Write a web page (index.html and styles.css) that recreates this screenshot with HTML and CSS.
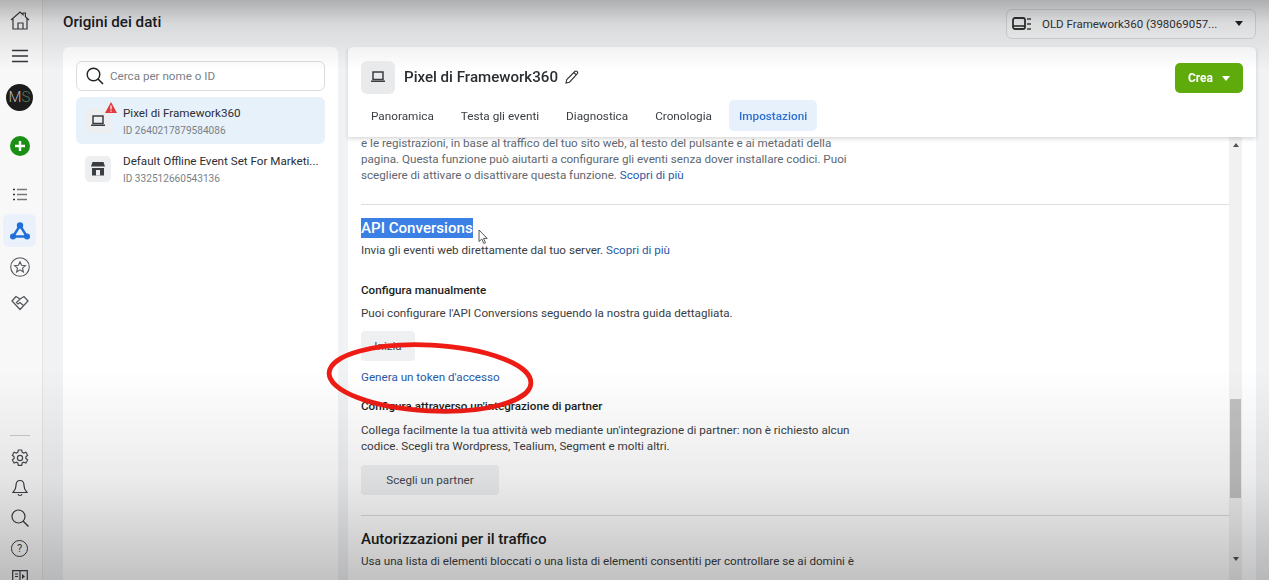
FILE: index.html
```html
<!DOCTYPE html>
<html lang="it">
<head>
    <meta charset="UTF-8">
    <meta name="viewport" content="width=device-width, initial-scale=1.0">
    <title>Origini dei dati</title>
    <link rel="stylesheet" href="styles.css">
</head>
<body>
    <div class="page">
        <!-- Barra laterale -->
        <nav class="sidebar">
            <svg class="nav-icon home" viewBox="0 0 20 20" width="20" height="20"><path d="M1 10 10 2l3 2.600V3h2.400v3.800L19 10M3 8.500V19h14V8.500M8 19v-6h5v6" fill="none" stroke="#3a3d42" stroke-width="1.200"/></svg>
            <svg class="nav-icon menu" viewBox="0 0 16 14" width="16" height="14"><path d="M0 1.500h16M0 7h16M0 12.500h16" stroke="#33363b" stroke-width="1.500"/></svg>
            <div class="avatar">M<span>S</span></div>
            <div class="add"><svg viewBox="0 0 20 20" width="20" height="20"><circle cx="10" cy="10" r="10" fill="#1a8f14"/><path d="M10 5v10M5 10h10" stroke="#fff" stroke-width="2.400"/></svg></div>
            <svg class="nav-icon list" viewBox="0 0 14 13" width="14" height="13"><path d="M4 1.500h10M4 6.500h10M4 11.500h10" stroke="#777" stroke-width="1.300"/><path d="M0 1.500h2M0 6.500h2M0 11.500h2" stroke="#333" stroke-width="1.600"/></svg>
            <div class="nav-active"><svg viewBox="0 0 20 18" width="20" height="18"><path d="M10 3.500 3 14.500h14z" fill="none" stroke="#1f6fdc" stroke-width="2.400"/><circle cx="10" cy="3.500" r="3.200" fill="#1f6fdc"/><circle cx="3" cy="14.500" r="3" fill="#1f6fdc"/><circle cx="17" cy="14.500" r="3" fill="#1f6fdc"/></svg></div>
            <svg class="nav-icon star" viewBox="0 0 20 20" width="20" height="20"><circle cx="10" cy="10" r="9.300" fill="none" stroke="#55585c" stroke-width="1.100"/><path d="m10 4.800 1.600 3.500 3.800.4-2.900 2.500.9 3.800L10 12.900l-3.400 2.100.9-3.800-2.900-2.500 3.800-.4z" fill="none" stroke="#55585c" stroke-width="1.100"/></svg>
            <svg class="nav-icon shake" viewBox="0 0 18 16" width="18" height="16"><path d="M5 1.500 1 6l8 8.500L17 6l-4-4.500-4 2.500zM9 4 5.500 7.500 7 9l2-1.500 4 3.500" fill="none" stroke="#55585c" stroke-width="1.300"/></svg>
            <div class="spacer"></div>
            <div class="nav-line"></div>
            <svg class="nav-icon gear" viewBox="0 0 18 18" width="18" height="18"><path d="m7.300 1h3.400l.5 2.300 1.500.8 2.200-.8 1.700 3-1.700 1.500v1.700l1.700 1.500-1.700 3-2.200-.8-1.500.8-.5 2.300H7.300l-.5-2.300-1.500-.8-2.200.8-1.700-3 1.700-1.500V7.800L1.400 6.300l1.700-3 2.200.8 1.500-.8z" fill="none" stroke="#45484c" stroke-width="1.200"/><circle cx="9" cy="9" r="2.600" fill="none" stroke="#45484c" stroke-width="1.200"/></svg>
            <svg class="nav-icon bell" viewBox="0 0 16 18" width="16" height="18"><path d="M8 1.500c-3 0-4 2.300-4 5 0 3.500-1 5-3 7h14c-2-2-3-3.500-3-7 0-2.700-1-5-4-5zM6 15c.3 2 3.700 2 4 0" fill="none" stroke="#3a3d42" stroke-width="1.200"/></svg>
            <svg class="nav-icon search" viewBox="0 0 18 18" width="18" height="18"><circle cx="7.500" cy="7.500" r="6.500" fill="none" stroke="#3a3d42" stroke-width="1.200"/><path d="m12 12 5.500 5.500" stroke="#3a3d42" stroke-width="1.400"/></svg>
            <div class="help">?</div>
            <svg class="nav-icon book" viewBox="0 0 16 14" width="16" height="14"><path d="M.7.700h14.600V14H.7zM8 .7V14M3 4h3M3 6.500h3" fill="none" stroke="#3a3d42" stroke-width="1.200"/><path d="m10 4 3 2.500L10 9z" fill="#3a3d42"/></svg>
        </nav>

        <div class="main">
            <header class="topbar">
                <h1>Origini dei dati</h1>
                <div class="account">
                    <svg viewBox="0 0 20 14" width="20" height="14"><rect x="1" y="1" width="12" height="11" rx="2" fill="none" stroke="#333" stroke-width="1.800"/><path d="M1 9h12" stroke="#333" stroke-width="1.600"/><path d="M15 2h4M15 7h4M15 12h4" stroke="#444" stroke-width="1.400"/></svg>
                    <span class="account-name">OLD Framework360 (398069057...</span>
                    <span class="caret"></span>
                </div>
            </header>

            <div class="columns">
                <!-- Lista delle origini -->
                <aside class="sources">
                    <div class="searchbox">
                        <svg viewBox="0 0 18 18" width="18" height="18"><circle cx="7.500" cy="7.500" r="6.300" fill="none" stroke="#222" stroke-width="1.400"/><path d="m12 12 5 5" stroke="#222" stroke-width="1.600"/></svg>
                        <span>Cerca per nome o ID</span>
                    </div>
                    <div class="source selected">
                        <div class="source-icon">
                            <svg viewBox="0 0 14 12" width="14" height="12"><path d="M2 1h10v7.500H2z" fill="none" stroke="#3a3d42" stroke-width="1.500"/><path d="M0 9.500h14V11H0z" fill="#3a3d42"/></svg>
                            <svg class="warn" viewBox="0 0 12 11" width="12" height="11"><path d="M6 0 12 11H0z" fill="#e0393e"/><path d="M6 3.500v4M6 8.500v1.200" stroke="#fff" stroke-width="1.200"/></svg>
                        </div>
                        <div>
                            <div class="source-name">Pixel di Framework360</div>
                            <div class="source-id">ID 2640217879584086</div>
                        </div>
                    </div>
                    <div class="source">
                        <div class="source-icon">
                            <svg viewBox="0 0 14 14" width="14" height="14"><path d="M1.500 0h11L14 4.500H0z" fill="#3a3d42"/><path d="M1 6h12v7.500H1z" fill="#3a3d42"/><path d="M5 8h4v5.500H5z" fill="#eceef0"/></svg>
                        </div>
                        <div class="source-text">
                            <div class="source-name">Default Offline Event Set For Marketi...</div>
                            <div class="source-id">ID 332512660543136</div>
                        </div>
                    </div>
                </aside>

                <!-- Dettaglio del pixel -->
                <section class="detail">
                    <div class="detail-head">
                        <div class="head-row">
                            <div class="head-icon"><svg viewBox="0 0 14 12" width="14" height="12"><path d="M2 1h10v7.500H2z" fill="none" stroke="#3a3d42" stroke-width="1.500"/><path d="M0 9.500h14V11H0z" fill="#3a3d42"/></svg></div>
                            <h2>Pixel di Framework360</h2>
                            <svg class="pencil" viewBox="0 0 14 14" width="14" height="14"><path d="M1 13l.8-3.500L9.800 1.500c.7-.7 1.700-.7 2.300 0 .7.700.7 1.600 0 2.300L4.500 12.200zM8.800 2.500l2.700 2.700" fill="none" stroke="#333" stroke-width="1.100"/></svg>
                            <div class="create">Crea<span class="caret white"></span></div>
                        </div>
                        <div class="tabs">
                            <a class="tab">Panoramica</a>
                            <a class="tab">Testa gli eventi</a>
                            <a class="tab">Diagnostica</a>
                            <a class="tab">Cronologia</a>
                            <a class="tab active">Impostazioni</a>
                        </div>
                    </div>

                    <div class="detail-body">
                        <div class="scroll">
                            <p class="intro">e le registrazioni, in base al traffico del tuo sito web, al testo del pulsante e ai metadati della pagina. Questa funzione può aiutarti a configurare gli eventi senza dover installare codici. Puoi scegliere di attivare o disattivare questa funzione. <a>Scopri di più</a></p>
                            <hr class="first-rule">
                            <h3 class="api-title"><span>API Conversions</span></h3>
                            <p class="api-text">Invia gli eventi web direttamente dal tuo server. <a>Scopri di più</a></p>
                            <h4 class="manual-title">Configura manualmente</h4>
                            <p class="manual-text">Puoi configurare l'API Conversions seguendo la nostra guida dettagliata.</p>
                            <div class="btn start">Inizia</div>
                            <a class="token">Genera un token d'accesso</a>
                            <h4 class="partner-title">Configura attraverso un'integrazione di partner</h4>
                            <p class="partner-text">Collega facilmente la tua attività web mediante un'integrazione di partner: non è richiesto alcun codice. Scegli tra Wordpress, Tealium, Segment e molti altri.</p>
                            <div class="btn partner">Scegli un partner</div>
                            <hr class="second-rule">
                            <h3 class="traffic-title">Autorizzazioni per il traffico</h3>
                            <p class="traffic-text">Usa una lista di elementi bloccati o una lista di elementi consentiti per controllare se ai domini è</p>
                        </div>
                        <div class="scrollbar">
                            <span class="arrow up"></span>
                            <div class="thumb"></div>
                            <span class="arrow down"></span>
                        </div>
                    </div>
                </section>
            </div>
        </div>
    </div>

    <!-- Annotazione del video, cursore e sfumature sopra la pagina -->
    <svg class="mark" viewBox="0 0 1269 580" width="1269" height="580">
        <ellipse cx="430" cy="378" rx="101" ry="33" transform="rotate(3 430 378)" fill="none" stroke="#ee1c14" stroke-width="4.800"/>
        <path d="M479 230v11.500l2.800-2.500 2 4.500 1.700-.8-2-4.300h3.700z" fill="#fff" stroke="#444" stroke-width=".9"/>
    </svg>
    <div class="shade"></div>
</body>
</html>
```

FILE: styles.css
```css
* {
    box-sizing: border-box;
}

body {
    margin: 0;
    font-family: Roboto, "Liberation Sans", sans-serif;
    color: #1c1e21;
    background-color: #f1f2f4;
    overflow: hidden;
}

.page {
    display: flex;
    width: 1269px;
    height: 580px;
    overflow: hidden;
}

/* Barra laterale */
.sidebar {
    display: flex;
    flex-direction: column;
    align-items: center;
    flex: 0 0 43px;
    height: 580px;
    padding: 10px 3px 0 0;
    background-color: #f8f8f9;
    border-right: 1px solid #e3e4e6;
}

.nav-icon {
    display: block;
    flex-shrink: 0;
}

.menu {
    margin-top: 19px;
}

.avatar {
    width: 27px;
    height: 27px;
    margin-top: 21px;
    flex-shrink: 0;
    border-radius: 50%;
    background-color: #1c1c1c;
    color: #b9b9b9;
    font-size: 15px;
    line-height: 27px;
    text-align: center;
    font-weight: 300;
}

.avatar span {
    color: #4f7f5f;
}

.add {
    height: 20px;
    margin-top: 25px;
    flex-shrink: 0;
}

.list {
    margin-top: 32px;
}

.nav-active {
    display: flex;
    align-items: center;
    justify-content: center;
    width: 33px;
    height: 33px;
    margin-top: 13px;
    flex-shrink: 0;
    border-radius: 6px;
    background-color: #eaf1fb;
}

.star {
    margin-top: 10px;
}

.shake {
    margin-top: 18px;
}

.spacer {
    flex: 1;
}

.nav-line {
    width: 20px;
    height: 1px;
    flex-shrink: 0;
    background-color: #c9cacb;
}

.gear {
    margin-top: 13px;
}

.bell {
    margin-top: 12px;
}

.search {
    margin-top: 12px;
}

.help {
    width: 17px;
    height: 17px;
    margin-top: 13px;
    flex-shrink: 0;
    border: 1px solid #3a3d42;
    border-radius: 50%;
    font-size: 11px;
    line-height: 15px;
    text-align: center;
    color: #3a3d42;
}

.book {
    margin-top: 13px;
    margin-bottom: -4px;
}

/* Contenuto */
.main {
    flex: 1;
    min-width: 0;
    padding: 0 13px 0 20px;
}

.topbar {
    display: flex;
    align-items: center;
    justify-content: space-between;
    height: 47px;
    padding-bottom: 3px;
}

h1 {
    margin: 0;
    font-size: 15.200px;
    font-weight: 500;
    color: #1c2025;
}

.account {
    display: flex;
    align-items: center;
    width: 250px;
    height: 30px;
    margin-top: 3px;
    padding: 0 12px 0 5px;
    border: 1px solid #d6d8da;
    border-radius: 6px;
    background-color: #f5f6f7;
    font-size: 11.500px;
    color: #333;
}

.account-name {
    flex: 1;
    margin-left: 10px;
    white-space: nowrap;
}

.caret {
    width: 0;
    height: 0;
    border-left: 4.500px solid transparent;
    border-right: 4.500px solid transparent;
    border-top: 5px solid #222;
}

.caret.white {
    margin-left: 9px;
    border-top-color: #fff;
}

.columns {
    display: flex;
    gap: 10px;
    height: 533px;
}

.sources {
    flex: 0 0 275px;
    min-width: 0;
    padding: 14px 13px;
    background-color: #fff;
    border-radius: 6px 6px 0 0;
}

.searchbox {
    display: flex;
    align-items: center;
    gap: 6px;
    height: 30px;
    padding-left: 9px;
    border: 1px solid #dadde1;
    border-radius: 6px;
    font-size: 11.650px;
    color: #7a7f86;
}

.source {
    display: flex;
    align-items: center;
    gap: 12px;
    height: 47px;
    margin-top: 7px;
    padding: 0 9px;
    border-radius: 6px;
}

.source.selected {
    margin-top: 6px;
    background-color: #e7f1fa;
}

.source + .source {
    margin-top: 1px;
}

.source-icon {
    position: relative;
    display: flex;
    align-items: center;
    justify-content: center;
    flex: 0 0 26px;
    height: 26px;
    border-radius: 5px;
    background-color: #eceef0;
}

.warn {
    position: absolute;
    top: -6px;
    right: -6px;
}

.source-name {
    font-size: 11.650px;
    line-height: 16px;
    white-space: nowrap;
    color: #2b2e33;
}

.source-id {
    margin-top: 3px;
    font-size: 10.100px;
    line-height: 13px;
    color: #7a7f86;
}

.detail {
    display: flex;
    flex-direction: column;
    flex: 1;
    min-width: 0;
    background-color: #fff;
    border-radius: 6px 6px 0 0;
}

.detail-head {
    position: relative;
    z-index: 1;
    flex: 0 0 90px;
    padding: 13px 13px 0 13px;
    box-shadow: 0 2px 4px rgba(0, 0, 0, 0.15);
}

.head-row {
    display: flex;
    align-items: center;
    height: 34px;
}

.head-icon {
    display: flex;
    align-items: center;
    justify-content: center;
    width: 34px;
    height: 33px;
    border-radius: 6px;
    background-color: #e9eaec;
}

h2 {
    margin: 0 0 0 9px;
    font-size: 15.100px;
    font-weight: 500;
    color: #2a2d31;
}

.pencil {
    margin-left: 7px;
}

.create {
    display: flex;
    align-items: center;
    justify-content: center;
    width: 68px;
    height: 30px;
    margin-left: auto;
    margin-top: 2px;
    border-radius: 5px;
    background-color: #5fab0b;
    color: #fff;
    font-size: 12px;
    font-weight: 700;
}

.tabs {
    display: flex;
    gap: 7px;
    margin-top: 6px;
}

.tab {
    height: 31px;
    padding: 0 10px;
    border-radius: 5px;
    font-size: 11.750px;
    line-height: 32px;
    color: #3a3d42;
}

.tab.active {
    background-color: #e7f1fc;
    color: #2f6fd0;
    font-weight: 500;
}

.detail-body {
    display: flex;
    flex: 1;
    min-height: 0;
    padding-right: 14px;
}

.scroll {
    flex: 1;
    min-width: 0;
    padding-left: 13px;
    overflow: hidden;
    font-size: 11.650px;
    line-height: 16px;
    color: #3a3d42;
}

.scroll a,
.token {
    color: #2a5aa8;
}

p {
    margin: 0;
    max-width: 490px;
}

hr {
    height: 1px;
    margin: 0;
    border: 0;
    background-color: #dadde1;
}

.intro {
    margin-top: -2px;
    color: #606770;
}

.first-rule {
    margin-top: 21px;
}

h3 {
    margin: 0;
    font-size: 15.100px;
    font-weight: 500;
    line-height: 20px;
    color: #1c1e21;
}

.api-title {
    margin-top: 13px;
}

.api-title span {
    display: inline-block;
    background-color: #3b80e4;
    color: #fff;
}

.api-text {
    margin-top: 4px;
}

h4 {
    margin: 0;
    font-size: 11.650px;
    font-weight: 500;
    line-height: 16px;
    color: #1c1e21;
}

.manual-title {
    margin-top: 24px;
}

.manual-text {
    margin-top: 7px;
    max-width: none;
}

.btn {
    display: flex;
    align-items: center;
    justify-content: center;
    height: 30px;
    border-radius: 4px;
    background-color: #eff0f2;
    color: #444950;
    font-size: 11.650px;
}

.start {
    width: 54px;
    margin-top: 10px;
}

.token {
    display: block;
    margin-top: 8px;
}

.partner-title {
    margin-top: 13px;
}

.partner-text {
    margin-top: 8px;
}

.partner {
    width: 138px;
    margin-top: 11px;
}

.second-rule {
    margin-top: 20px;
}

.traffic-title {
    margin-top: 13px;
}

.traffic-text {
    margin-top: 4px;
    max-width: none;
}

.scrollbar {
    display: flex;
    flex-direction: column;
    align-items: center;
    flex: 0 0 13px;
    background-color: #f1f1f1;
}

.thumb {
    flex: 0 0 99px;
    width: 11px;
    margin-top: 252px;
    background-color: #c1c1c1;
}

.arrow {
    width: 0;
    height: 0;
    border-left: 3.500px solid transparent;
    border-right: 3.500px solid transparent;
}

.arrow.up {
    margin-top: 6px;
    border-bottom: 4px solid #505050;
}

.arrow.down {
    margin-top: 59px;
    border-top: 4px solid #505050;
}

/* Sopra la pagina */
.mark {
    position: fixed;
    top: 0;
    left: 0;
    pointer-events: none;
}

.shade {
    position: fixed;
    top: 0;
    left: 0;
    width: 1269px;
    height: 580px;
    pointer-events: none;
    background: linear-gradient(to bottom, rgba(0, 0, 0, 0.28) 0, rgba(0, 0, 0, 0.1) 24px, rgba(0, 0, 0, 0) 70px, rgba(0, 0, 0, 0) 370px, rgba(0, 0, 0, 0.08) 480px, rgba(0, 0, 0, 0.24) 580px);
}
```
